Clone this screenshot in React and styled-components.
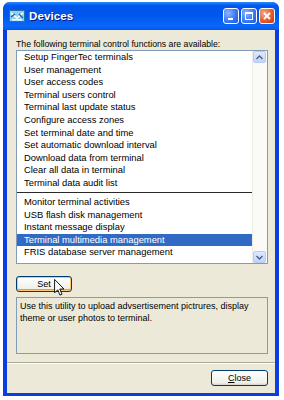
import styled, { createGlobalStyle } from 'styled-components'

const GlobalStyle = createGlobalStyle`
    html, body {
        margin: 0;
        padding: 0;
        background: #ffffff;
    }
    * {
        box-sizing: border-box;
    }
`

const Page = styled.div`
    width: 284px;
    height: 400px;
    padding: 2px 0 0 3px;
    font-family: Tahoma, 'Liberation Sans', Arial, sans-serif;
`

const Window = styled.div`
    width: 276px;
    height: 394px;
    display: flex;
    flex-direction: column;
    background: #0b3ee0;
    border-radius: 7px 7px 0 0;
    overflow: hidden;
`

const TitleBar = styled.div`
    height: 28px;
    flex: none;
    display: flex;
    align-items: center;
    padding: 0 4px 0 6px;
    background: linear-gradient(
        to bottom,
        #2a8cff 0%,
        #0058ee 12%,
        #0055ea 45%,
        #0a67fa 85%,
        #0058e8 100%
    );
`

const TitleText = styled.span`
    flex: 1;
    margin-left: 4px;
    color: #ffffff;
    font-weight: 700;
    font-size: 11.5px;
    letter-spacing: 0.1px;
    text-shadow: 1px 1px #0a1883;
`

const CaptionButton = styled.div`
    width: 16px;
    height: 16px;
    margin-left: 2px;
    border: 1px solid #ffffff;
    border-radius: 3px;
    display: flex;
    align-items: center;
    justify-content: center;
    background: ${(p) =>
        p.$close
            ? 'radial-gradient(circle at 30% 30%, #f3a98b 0%, #e35d2d 55%, #c3340d 100%)'
            : 'radial-gradient(circle at 30% 30%, #8fb4ff 0%, #3a7bf5 55%, #1e55d6 100%)'};
`

const Body = styled.div`
    flex: 1;
    margin: 0 4px 3px 4px;
    background: #ece9d8;
    display: flex;
    flex-direction: column;
    padding: 4px 7px 0 9px;
`

const Label = styled.div`
    font-size: 8.7px;
    line-height: 12px;
    height: 16px;
    padding-top: 4px;
    color: #000000;
    white-space: nowrap;
`

const ListBox = styled.div`
    height: 214px;
    border: 1px solid #7f9db9;
    background: #ffffff;
    display: flex;
`

const ListItems = styled.div`
    flex: 1;
    display: flex;
    flex-direction: column;
`

const Item = styled.div`
    height: 12.6px;
    line-height: 12.6px;
    padding-left: 7px;
    font-size: 9.4px;
    white-space: nowrap;
    overflow: hidden;
    color: ${(p) => (p.$selected ? '#ffffff' : '#000000')};
    background: ${(p) => (p.$selected ? '#316ac5' : 'transparent')};
`

const Separator = styled.div`
    height: 6.5px;
    display: flex;
    align-items: center;
    &::after {
        content: '';
        flex: 1;
        height: 1px;
        background: #2a2a2a;
    }
`

const ScrollBar = styled.div`
    width: 15px;
    display: flex;
    flex-direction: column;
    justify-content: space-between;
    background: #fbfaf6;
    border-left: 1px solid #eeede5;
    padding: 0 1px 0 0;
`

const ScrollButton = styled.div`
    height: 12px;
    border: 1px solid #b9cbf3;
    border-radius: 2px;
    background: linear-gradient(to bottom, #dfe9ff, #c1d3fb);
    display: flex;
    align-items: center;
    justify-content: center;
`

const SetRow = styled.div`
    position: relative;
    margin-top: 9px;
    height: 16px;
`

const PushButton = styled.button`
    width: ${(p) => p.$width || 56}px;
    height: 16px;
    padding: 0;
    border: 1px solid #003c74;
    border-radius: 3px;
    font-family: inherit;
    font-size: 9px;
    color: #000000;
    background: linear-gradient(to bottom, #ffffff, #f0f0ea 85%, #d6d0c5);
    box-shadow: ${(p) =>
        p.$hot ? 'inset 0 0 0 1px #fcc56e, inset 0 -1px 0 1px #e5a23a' : 'none'};
`

const Cursor = styled.svg`
    position: absolute;
    left: 38px;
    top: 6px;
`

const Description = styled.div`
    margin-top: 8px;
    height: 57px;
    border: 1px solid #7f9db9;
    padding: 2px 3px;
    font-size: 9px;
    line-height: 12px;
    color: #000000;
`

const Footer = styled.div`
    margin: 8px -7px 0 -9px;
    border-top: 1px solid #aca899;
    box-shadow: inset 0 1px 0 #ffffff;
    flex: 1;
    display: flex;
    justify-content: flex-end;
    padding: 7px 7px 0 0;
`

const Underline = styled.span`
    text-decoration: underline;
`

const topItems = [
    'Setup FingerTec terminals',
    'User management',
    'User access codes',
    'Terminal users control',
    'Terminal last update status',
    'Configure access zones',
    'Set terminal date and time',
    'Set automatic download interval',
    'Download data from terminal',
    'Clear all data in terminal',
    'Terminal data audit list',
]

const bottomItems = [
    'Monitor terminal activities',
    'USB flash disk management',
    'Instant message display',
    'Terminal multimedia management',
    'FRIS database server management',
]

function DevicesIcon() {
    return (
        <svg width='16' height='14' viewBox='0 0 16 14'>
            <rect x='0.5' y='1.5' width='15' height='11' rx='1' fill='#8fd0f0' stroke='#2a6fa8' />
            <path d='M2 4 L8 9 L14 4' stroke='#ffffff' strokeWidth='1.6' fill='none' />
            <path d='M2 8 L6 5 M10 5 L14 9' stroke='#1b5d9a' strokeWidth='1.2' fill='none' />
            <rect x='3' y='10' width='10' height='1.5' fill='#ffffff' />
        </svg>
    )
}

function App() {
    return (
        <>
            <GlobalStyle />
            <Page>
                <Window>
                    <TitleBar>
                        <DevicesIcon />
                        <TitleText>Devices</TitleText>
                        <CaptionButton>
                            <svg width='10' height='10' viewBox='0 0 10 10'>
                                <rect x='2' y='7' width='5' height='2' fill='#ffffff' />
                            </svg>
                        </CaptionButton>
                        <CaptionButton>
                            <svg width='10' height='10' viewBox='0 0 10 10'>
                                <rect x='1.5' y='1.5' width='7' height='7' fill='none' stroke='#ffffff' />
                                <rect x='1' y='1' width='8' height='2' fill='#ffffff' />
                            </svg>
                        </CaptionButton>
                        <CaptionButton $close>
                            <svg width='10' height='10' viewBox='0 0 10 10'>
                                <path d='M2 2 L8 8 M8 2 L2 8' stroke='#ffffff' strokeWidth='1.8' />
                            </svg>
                        </CaptionButton>
                    </TitleBar>
                    <Body>
                        <Label>The following terminal control functions are available:</Label>
                        <ListBox>
                            <ListItems>
                                {topItems.map((t) => (
                                    <Item key={t}>{t}</Item>
                                ))}
                                <Separator />
                                {bottomItems.map((t) => (
                                    <Item key={t} $selected={t === 'Terminal multimedia management'}>
                                        {t}
                                    </Item>
                                ))}
                            </ListItems>
                            <ScrollBar>
                                <ScrollButton>
                                    <svg width='7' height='5' viewBox='0 0 7 5'>
                                        <path d='M0.5 4 L3.5 1 L6.5 4' stroke='#4d6185' strokeWidth='1.4' fill='none' />
                                    </svg>
                                </ScrollButton>
                                <ScrollButton>
                                    <svg width='7' height='5' viewBox='0 0 7 5'>
                                        <path d='M0.5 1 L3.5 4 L6.5 1' stroke='#4d6185' strokeWidth='1.4' fill='none' />
                                    </svg>
                                </ScrollButton>
                            </ScrollBar>
                        </ListBox>
                        <SetRow>
                            <PushButton $hot>Set</PushButton>
                            <Cursor width='11' height='17' viewBox='0 0 12 19'>
                                <path
                                    d='M0.5 0.5 L0.5 15.5 L4 12 L6.5 18 L8.8 17 L6.3 11.2 L11 11.2 Z'
                                    fill='#ffffff'
                                    stroke='#000000'
                                    strokeWidth='1'
                                    strokeLinejoin='round'
                                />
                            </Cursor>
                        </SetRow>
                        <Description>
                            Use this utility to upload advsertisement pictrures, display theme or user photos to
                            terminal.
                        </Description>
                        <Footer>
                            <PushButton $width={57}>
                                <Underline>C</Underline>lose
                            </PushButton>
                        </Footer>
                    </Body>
                </Window>
            </Page>
        </>
    )
}

export default App
